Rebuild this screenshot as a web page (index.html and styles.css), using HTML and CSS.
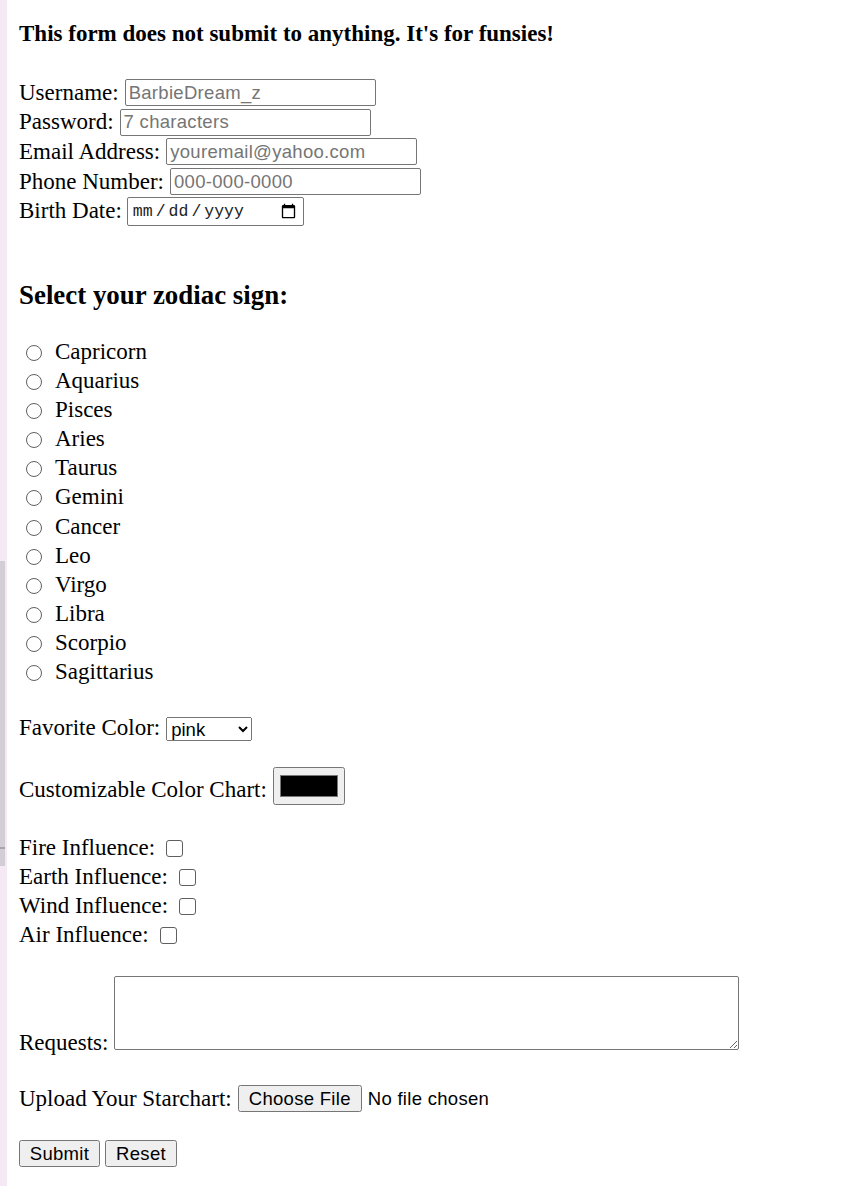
FILE: index.html
```html
<!DOCTYPE html>
<html lang="en">
<head>
<meta charset="utf-8">
<title>Zodiac Form</title>
<link rel="stylesheet" href="styles.css">
</head>
<body>
<div class="edge"><div class="edge-thumb"></div></div>
<main class="page">
  <h4 class="notice">This form does not submit to anything. It's for funsies!</h4>
  <form class="form">
    <div class="fields">
      <label class="row field-row"><span>Username:</span><input class="text" type="text" placeholder="BarbieDream_z"></label>
      <label class="row field-row"><span>Password:</span><input class="text" type="password" placeholder="7 characters"></label>
      <label class="row field-row"><span>Email Address:</span><input class="text" type="email" placeholder="youremail@yahoo.com"></label>
      <label class="row field-row"><span>Phone Number:</span><input class="text" type="tel" placeholder="000-000-0000"></label>
      <label class="row field-row"><span>Birth Date:</span><input class="date" type="date"></label>
    </div>

    <h3 class="zodiac-title">Select your zodiac sign:</h3>
    <div class="zodiac">
      <label class="row radio-row"><input class="radio" type="radio" name="sign"><span>Capricorn</span></label>
      <label class="row radio-row"><input class="radio" type="radio" name="sign"><span>Aquarius</span></label>
      <label class="row radio-row"><input class="radio" type="radio" name="sign"><span>Pisces</span></label>
      <label class="row radio-row"><input class="radio" type="radio" name="sign"><span>Aries</span></label>
      <label class="row radio-row"><input class="radio" type="radio" name="sign"><span>Taurus</span></label>
      <label class="row radio-row"><input class="radio" type="radio" name="sign"><span>Gemini</span></label>
      <label class="row radio-row"><input class="radio" type="radio" name="sign"><span>Cancer</span></label>
      <label class="row radio-row"><input class="radio" type="radio" name="sign"><span>Leo</span></label>
      <label class="row radio-row"><input class="radio" type="radio" name="sign"><span>Virgo</span></label>
      <label class="row radio-row"><input class="radio" type="radio" name="sign"><span>Libra</span></label>
      <label class="row radio-row"><input class="radio" type="radio" name="sign"><span>Scorpio</span></label>
      <label class="row radio-row"><input class="radio" type="radio" name="sign"><span>Sagittarius</span></label>
    </div>

    <label class="row favorite"><span>Favorite Color:</span><select class="select">
        <option>pink</option>
        <option>purple</option>
        <option>blue</option>
        <option>green</option>
      </select></label>

    <label class="row chart"><span class="chart-label">Customizable Color Chart:</span><input class="color" type="color" value="#000000"></label>

    <div class="elements">
      <label class="row check-row"><span>Fire Influence:</span><input class="check" type="checkbox"></label>
      <label class="row check-row"><span>Earth Influence:</span><input class="check" type="checkbox"></label>
      <label class="row check-row"><span>Wind Influence:</span><input class="check" type="checkbox"></label>
      <label class="row check-row"><span>Air Influence:</span><input class="check" type="checkbox"></label>
    </div>

    <label class="row requests"><span class="requests-label">Requests:</span><textarea class="textarea"></textarea></label>

    <label class="row upload"><span>Upload Your Starchart:</span><input class="file" type="file"></label>

    <div class="row actions">
      <input class="btn btn-submit" type="submit" value="Submit">
      <input class="btn btn-reset" type="reset" value="Reset">
    </div>
  </form>
</main>
</body>
</html>
```

FILE: styles.css
```css
html, body {
  margin: 0;
  padding: 0;
  background: #ffffff;
}

body {
  display: flex;
  min-height: 1186px;
}

.edge {
  flex: none;
  width: 7px;
  background: #f5e9f6;
  position: relative;
}

.edge-thumb {
  position: absolute;
  left: 0;
  top: 561px;
  width: 5px;
  height: 305px;
  background: #d3ced5;
}

.edge-thumb::after {
  content: "";
  position: absolute;
  left: 0;
  right: 0;
  top: 286px;
  height: 2px;
  background: #a9a4ab;
}

.page {
  flex: 1;
  padding: 0 0 0 12px;
  font-family: "Liberation Serif", "Times New Roman", serif;
  font-size: 23px;
  color: #000;
}

.notice {
  margin: 21px 0 31.5px;
  font-size: 23px;
  font-weight: bold;
  line-height: 25.5px;
}

.form {
  margin: 0;
}

.row {
  display: flex;
  align-items: center;
  gap: 5px;
}

.field-row {
  height: 29.6px;
}

.text,
.select,
.file,
.btn {
  font-family: "Liberation Sans", Arial, sans-serif;
  font-size: 18.5px;
  letter-spacing: 0.3px;
  color: #000;
}

.text {
  box-sizing: border-box;
  width: 251px;
  height: 27px;
  margin: 0 0 0 1px;
  padding: 1px 3px;
  border: 1px solid #767676;
  border-radius: 2px;
}

.text::placeholder {
  color: #757575;
}

.date {
  box-sizing: border-box;
  width: 177px;
  height: 29px;
  margin: 0;
  padding: 1px 4px;
  border: 1px solid #767676;
  border-radius: 2px;
  font-family: "Liberation Mono", "Courier New", monospace;
  font-size: 16.5px;
  color: #222;
}

.date::-webkit-datetime-edit-text {
  padding: 0 2px;
}

.zodiac-title {
  margin: 54px 0 27.5px;
  font-size: 26.9px;
  line-height: 30px;
  font-weight: bold;
}

.radio-row {
  height: 29.1px;
  gap: 0;
}

.radio {
  appearance: none;
  box-sizing: border-box;
  width: 16px;
  height: 16px;
  margin: 2px 13px 0 7px;
  border: 1px solid #5f5f5f;
  border-radius: 50%;
  background: #fff;
}

.favorite {
  height: 29px;
  margin-top: 26.5px;
}

.select {
  box-sizing: border-box;
  width: 86px;
  height: 24px;
  margin: 2px 0 0 1px;
  letter-spacing: 0;
}

.chart {
  height: 38px;
  margin-top: 25px;
  gap: 6px;
}

.chart-label {
  padding-top: 8px;
}

.color {
  box-sizing: border-box;
  width: 72px;
  height: 38px;
  margin: 0;
  padding: 3px 4px;
}

.elements {
  margin-top: 28.5px;
}

.check-row {
  height: 29px;
  gap: 0;
}

.check {
  appearance: none;
  box-sizing: border-box;
  width: 17px;
  height: 17px;
  margin: 0 0 0 11px;
  border: 1px solid #5f5f5f;
  border-radius: 3px;
  background: #fff;
}

.requests {
  align-items: flex-end;
  margin-top: 26.5px;
  gap: 6px;
}

.requests-label {
  margin-bottom: -6px;
}

.textarea {
  box-sizing: border-box;
  width: 625px;
  height: 74px;
  margin: 0;
  border: 1px solid #767676;
  border-radius: 2px;
}

.upload {
  height: 27px;
  margin-top: 35px;
  gap: 6px;
}

.file {
  margin: 0;
}

.file::file-selector-button {
  box-sizing: border-box;
  width: 124px;
  height: 27px;
  padding: 0;
  margin-right: 6px;
  font-family: "Liberation Sans", Arial, sans-serif;
  font-size: 18.5px;
  letter-spacing: 0.3px;
}

.actions {
  height: 27px;
  margin-top: 28px;
  gap: 5px;
}

.btn {
  box-sizing: border-box;
  height: 27px;
  margin: 0;
  padding: 0;
}

.btn-submit {
  width: 81px;
}

.btn-reset {
  width: 72px;
}
```
